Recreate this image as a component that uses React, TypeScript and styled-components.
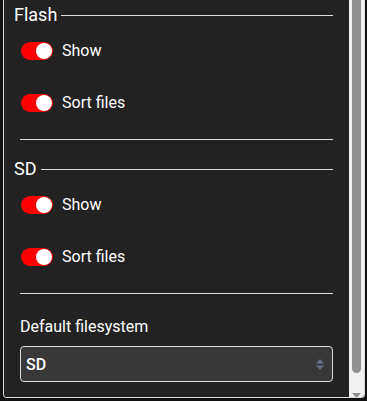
import { createGlobalStyle } from 'styled-components';
import styled from 'styled-components';

const GlobalStyle = createGlobalStyle`
  html, body {
    margin: 0;
    padding: 0;
    background: #111;
    font-family: Roboto, "Liberation Sans", sans-serif;
    color: #fff;
  }
`;

const Frame = styled.div`
  margin-left: 3px;
  width: 362px;
  box-sizing: border-box;
  display: flex;
  border: 1px solid #dcdcdc;
  border-top: none;
  border-radius: 0 0 4px 4px;
  overflow: hidden;
`;

const Content = styled.div`
  flex: 1;
  background: #222;
  padding: 0 16px 15px 16px;
  display: flex;
  flex-direction: column;
`;

const Legend = styled.div<{ $top: number }>`
  margin: ${(p) => p.$top}px 0 0 -6px;
  height: 24px;
  display: flex;
  align-items: center;
  font-size: 18px;
  line-height: 24px;

  &::after {
    content: '';
    flex: 1;
    height: 1px;
    margin-left: 4px;
    background: #dcdcdc;
  }
`;

const ToggleList = styled.div`
  margin-top: 14px;
  display: flex;
  flex-direction: column;
  gap: 32px;
`;

const ToggleRow = styled.label`
  height: 20px;
  display: flex;
  align-items: center;
  gap: 9px;
  font-size: 16px;
  line-height: 20px;
`;

const Switch = styled.span<{ $on: boolean }>`
  margin-left: 1px;
  width: 32px;
  height: 18px;
  border-radius: 9px;
  background: ${(p) => (p.$on ? '#ff0000' : '#666')};
  display: flex;
  align-items: center;
  justify-content: ${(p) => (p.$on ? 'flex-end' : 'flex-start')};
  padding: 0 1px;
  box-sizing: border-box;

  &::after {
    content: '';
    width: 16px;
    height: 16px;
    border-radius: 50%;
    background: #fff;
  }
`;

const Divider = styled.div`
  margin-top: 26px;
  height: 1px;
  background: #dcdcdc;
`;

const FieldLabel = styled.div`
  margin-top: 23px;
  font-size: 16px;
  line-height: 20px;
`;

const SelectBox = styled.div`
  margin-top: 9px;
  height: 36px;
  box-sizing: border-box;
  border: 1px solid #dcdcdc;
  border-radius: 4px;
  background: #383838;
  display: flex;
  align-items: center;
  justify-content: space-between;
  padding: 0 8px 0 5px;
  font-size: 16px;
  font-weight: 500;
`;

const Track = styled.div`
  width: 15px;
  background: #f1f1f1;
  display: flex;
  flex-direction: column;
  align-items: center;
`;

const Thumb = styled.div`
  flex: 1;
  width: 9px;
  background: #8f8f8f;
  border-radius: 0 0 5px 5px;
`;

const ArrowButton = styled.div`
  height: 24px;
  padding-top: 10px;
  box-sizing: border-box;
`;

const sections = [
  { title: 'Flash', top: 3 },
  { title: 'SD', top: 17 },
];

export default function App() {
  return (
    <>
      <GlobalStyle />
      <Frame>
        <Content>
          {sections.map((s) => (
            <div key={s.title}>
              <Legend $top={s.top}>{s.title}</Legend>
              <ToggleList>
                <ToggleRow>
                  <Switch $on />
                  Show
                </ToggleRow>
                <ToggleRow>
                  <Switch $on />
                  Sort files
                </ToggleRow>
              </ToggleList>
              <Divider />
            </div>
          ))}
          <FieldLabel>Default filesystem</FieldLabel>
          <SelectBox>
            <span>SD</span>
            <svg width="8" height="11" viewBox="0 0 8 11">
              <path d="M4 0 L8 4.5 H0 Z M0 6.5 H8 L4 11 Z" fill="#646d85" />
            </svg>
          </SelectBox>
        </Content>
        <Track>
          <Thumb />
          <ArrowButton>
            <svg width="9" height="5" viewBox="0 0 9 5">
              <path d="M0 0 H9 L4.5 5 Z" fill="#8f8f8f" />
            </svg>
          </ArrowButton>
        </Track>
      </Frame>
    </>
  );
}
